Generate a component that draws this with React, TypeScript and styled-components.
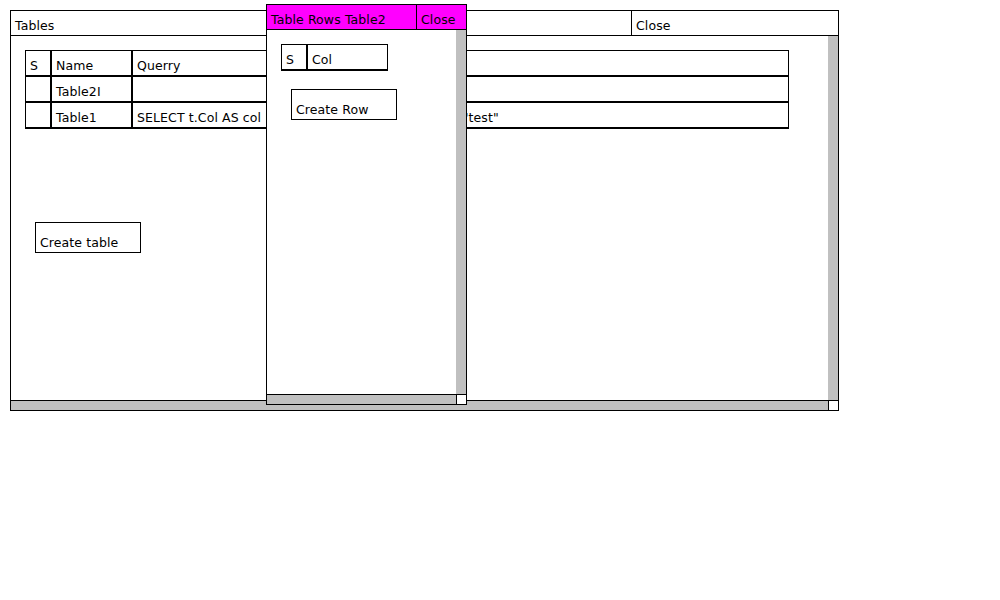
import React from "react";
import styled, { createGlobalStyle } from "styled-components";

const GlobalStyle = createGlobalStyle`
  html, body {
    margin: 0;
    padding: 0;
    background: #ffffff;
  }
  body {
    font-family: "DejaVu Sans", Verdana, sans-serif;
    font-size: 12.5px;
    letter-spacing: 0.1px;
    color: #000000;
  }
  * { box-sizing: border-box; }
`;

const Desktop = styled.div`
  position: relative;
  width: 1000px;
  height: 600px;
  padding: 10px;
`;

const WindowFrame = styled.div<{ $width: number; $floating?: boolean }>`
  width: ${(p) => p.$width}px;
  height: 401px;
  border: 1px solid #000;
  background: #fff;
  display: grid;
  grid-template-columns: 1fr 10px;
  grid-template-rows: 25px 1fr 10px;
  ${(p) =>
    p.$floating
      ? `
    position: absolute;
    left: 266px;
    top: 4px;
    z-index: 2;
  `
      : ""}
`;

const TitleBar = styled.div<{ $active?: boolean }>`
  grid-column: 1 / -1;
  display: flex;
  border-bottom: 1px solid #000;
  background: ${(p) => (p.$active ? "#ff00ff" : "#ffffff")};
`;

const TitleText = styled.div`
  flex: 1;
  padding: 8px 4px 2px;
  line-height: 14px;
  white-space: nowrap;
  overflow: hidden;
`;

const CloseCell = styled.div<{ $width: number }>`
  width: ${(p) => p.$width}px;
  border-left: 1px solid #000;
  padding: 8px 4px 2px;
  line-height: 14px;
  white-space: nowrap;
`;

const Body = styled.div`
  padding: 14px;
  overflow: hidden;
  display: flex;
  flex-direction: column;
  align-items: flex-start;
`;

const VScroll = styled.div`
  background: #c0c0c0;
`;

const HScroll = styled.div`
  background: #c0c0c0;
  border-top: 1px solid #000;
`;

const Corner = styled.div`
  background: #fff;
  border-top: 1px solid #000;
  border-left: 1px solid #000;
`;

const DataTable = styled.table<{ $width: number }>`
  width: ${(p) => p.$width}px;
  table-layout: fixed;
  border-collapse: separate;
  border-spacing: 0;
  border-bottom: 1px solid #000;
  flex: none;
`;

const Cell = styled.td`
  border: 1px solid #000;
  height: 26px;
  padding: 8px 4px 2px;
  line-height: 14px;
  vertical-align: bottom;
  white-space: nowrap;
  overflow: hidden;
  font-weight: normal;
  text-align: left;
`;

const HeadCell = styled(Cell).attrs({ as: "th" })``;

const ActionButton = styled.button<{ $gap: number }>`
  margin: ${(p) => p.$gap}px 0 0 10px;
  width: 106px;
  height: 31px;
  border: 1px solid #000;
  background: #fff;
  font: inherit;
  letter-spacing: inherit;
  color: #000;
  text-align: left;
  padding: 13px 4px 2px;
  line-height: 14px;
  flex: none;
`;

type WinProps = {
  title: string;
  width: number;
  closeWidth: number;
  active?: boolean;
  floating?: boolean;
  children: React.ReactNode;
};

const Window = ({ title, width, closeWidth, active, floating, children }: WinProps) => (
  <WindowFrame $width={width} $floating={floating}>
    <TitleBar $active={active}>
      <TitleText>{title}</TitleText>
      <CloseCell $width={closeWidth}>Close</CloseCell>
    </TitleBar>
    <Body>{children}</Body>
    <VScroll />
    <HScroll />
    <Corner />
  </WindowFrame>
);

const tables = [
  { name: "Table2I", query: "" },
  { name: "Table1", query: 'SELECT t.Col AS col FROM Table2I t WHERE t.Col = "test"' },
];

export default function App() {
  return (
    <>
      <GlobalStyle />
      <Desktop>
        <Window title="Tables" width={829} closeWidth={207}>
          <DataTable $width={764}>
            <colgroup>
              <col style={{ width: 26 }} />
              <col style={{ width: 81 }} />
              <col />
            </colgroup>
            <thead>
              <tr>
                <HeadCell>S</HeadCell>
                <HeadCell>Name</HeadCell>
                <HeadCell>Querry</HeadCell>
              </tr>
            </thead>
            <tbody>
              {tables.map((t) => (
                <tr key={t.name}>
                  <Cell />
                  <Cell>{t.name}</Cell>
                  <Cell>{t.query}</Cell>
                </tr>
              ))}
            </tbody>
          </DataTable>
          <ActionButton $gap={93}>Create table</ActionButton>
        </Window>
        <Window title="Table Rows Table2" width={201} closeWidth={50} active floating>
          <DataTable $width={107}>
            <colgroup>
              <col style={{ width: 26 }} />
              <col style={{ width: 81 }} />
            </colgroup>
            <thead>
              <tr>
                <HeadCell>S</HeadCell>
                <HeadCell>Col</HeadCell>
              </tr>
            </thead>
          </DataTable>
          <ActionButton $gap={18}>Create Row</ActionButton>
        </Window>
      </Desktop>
    </>
  );
}
